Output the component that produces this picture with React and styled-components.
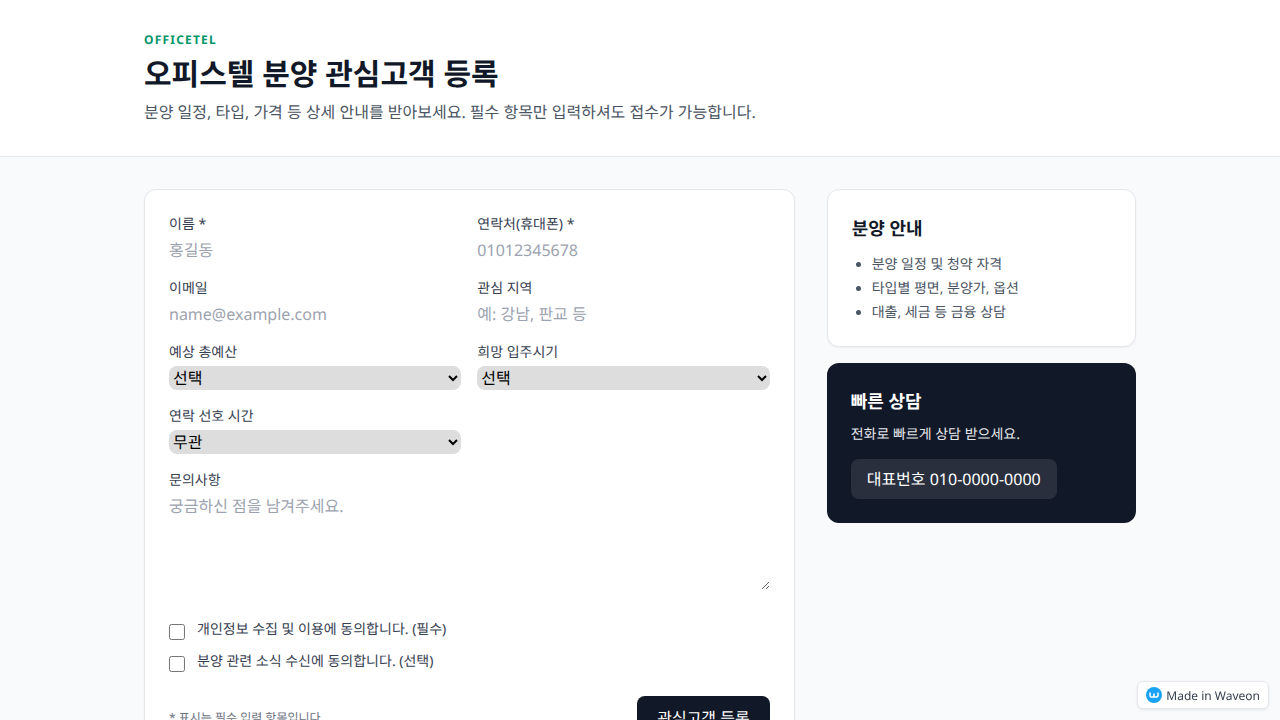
import React from "react";
import styled, { createGlobalStyle } from "styled-components";

const GlobalStyle = createGlobalStyle`
  * {
    box-sizing: border-box;
  }
  body {
    margin: 0;
    background: #f9fafb;
    color: #111827;
    font-family: "Noto Sans", "Noto Sans CJK KR", sans-serif;
    text-rendering: geometricPrecision;
    -webkit-font-smoothing: antialiased;
  }
`;

const Header = styled.header`
  background: #fff;
  border-bottom: 1px solid #e5e7eb;
  padding: 32px 0;
`;

const Container = styled.div`
  width: 992px;
  margin: 0 auto;
`;

const Kicker = styled.p`
  margin: 0;
  color: #059669;
  font-size: 12px;
  line-height: 16px;
  font-weight: 700;
  letter-spacing: 1.2px;
`;

const Title = styled.h1`
  margin: 8px 0 0;
  font-size: 30px;
  line-height: 36px;
  font-weight: 700;
  color: #111827;
`;

const Subtitle = styled.p`
  margin: 8px 0 0;
  font-size: 16px;
  line-height: 24px;
  color: #4b5563;
`;

const Main = styled(Container)`
  display: grid;
  grid-template-columns: minmax(0, 1fr) 309.33px;
  gap: 32px;
  padding: 32px 0;
  align-items: start;
`;

const FormCard = styled.form`
  background: #fff;
  border: 1px solid #e5e7eb;
  border-radius: 12px;
  box-shadow: 0 1px 2px rgba(0, 0, 0, 0.05);
  padding: 24px;
`;

const FieldGrid = styled.div`
  display: grid;
  grid-template-columns: 1fr 1fr;
  gap: 16px;
`;

const Field = styled.label`
  display: flex;
  flex-direction: column;
  gap: 3px;
  grid-column: ${({ $wide }) => ($wide ? "1 / -1" : "auto")};
`;

const LabelText = styled.span`
  font-size: 14px;
  line-height: 21px;
  color: #374151;
`;

const Input = styled.input`
  border: 0;
  outline: 0;
  padding: 0;
  width: 100%;
  height: 24px;
  background: transparent;
  font: inherit;
  font-size: 16px;
  line-height: 24px;
  text-rendering: geometricPrecision;
  &::placeholder {
    color: #9ca3af;
  }
`;

const Select = styled.select`
  border: 0;
  width: 100%;
  height: 24px;
  border-radius: 8px;
  background: #dddddd;
  color: #000;
  font: inherit;
  font-size: 16px;
  text-rendering: geometricPrecision;
`;

const TextareaWrap = styled.div`
  line-height: normal;
`;

const Textarea = styled.textarea`
  border: 0;
  outline: 0;
  padding: 0;
  width: 100%;
  height: 96px;
  background: transparent;
  font: inherit;
  font-size: 16px;
  line-height: 24px;
  text-rendering: geometricPrecision;
  &::placeholder {
    color: #9ca3af;
  }
`;

const Consents = styled.div`
  display: flex;
  flex-direction: column;
  gap: 11px;
  margin-top: 24px;
`;

const Consent = styled.label`
  display: flex;
  align-items: flex-start;
  gap: 12px;
  font-size: 14px;
  line-height: 21px;
  color: #374151;
`;

const Checkbox = styled.input.attrs({ type: "checkbox" })`
  width: 16px;
  height: 16px;
  margin: 5px 0 0;
  flex: none;
`;

const FormFooter = styled.div`
  display: flex;
  align-items: center;
  justify-content: space-between;
  margin-top: 24px;
`;

const Note = styled.p`
  margin: 0;
  font-size: 12px;
  line-height: 16px;
  color: #6b7280;
`;

const SubmitButton = styled.button`
  border: 0;
  border-radius: 8px;
  background: #111827;
  color: #fff;
  font: inherit;
  font-size: 16px;
  line-height: 24px;
  padding: 10px 20px;
  text-rendering: geometricPrecision;
`;

const Sidebar = styled.aside`
  display: flex;
  flex-direction: column;
  gap: 16px;
`;

const InfoCard = styled.section`
  background: #fff;
  border: 1px solid #e5e7eb;
  border-radius: 12px;
  box-shadow: 0 1px 2px rgba(0, 0, 0, 0.05);
  padding: 24px 24px 23px;
`;

const CardTitle = styled.h3`
  margin: 0;
  font-size: 18px;
  line-height: 30px;
  font-weight: 700;
  color: ${({ $light }) => ($light ? "#fff" : "#111827")};
`;

const InfoList = styled.ul`
  margin: 10px 0 0;
  padding: 0 0 0 20px;
  font-size: 14px;
  line-height: 21px;
  color: #4b5563;
`;

const InfoItem = styled.li`
  & + & {
    margin-top: 3px;
  }
`;

const DarkCard = styled.section`
  background: #111827;
  border-radius: 12px;
  padding: 24px;
  color: #fff;
`;

const DarkText = styled.p`
  margin: 7px 0 0;
  font-size: 14px;
  line-height: 21px;
  color: #e5e7eb;
`;

const PhoneButton = styled.a`
  display: block;
  width: fit-content;
  margin-top: 14px;
  padding: 8px 16px;
  border-radius: 8px;
  background: rgba(255, 255, 255, 0.1);
  color: #fff;
  font-size: 16px;
  line-height: 24px;
`;

const Badge = styled.a`
  position: fixed;
  right: 11px;
  bottom: 11px;
  display: flex;
  align-items: center;
  gap: 4px;
  height: 28px;
  padding: 0 8px;
  background: #fff;
  border: 1px solid #e5e7eb;
  border-radius: 6px;
  box-shadow: 0 1px 3px rgba(0, 0, 0, 0.08);
  font-family: "Noto Sans", sans-serif;
  font-size: 12px;
  color: #374151;
`;

const BadgeLogo = () => (
  <svg width="16" height="16" viewBox="0 0 16 16" aria-hidden="true">
    <circle cx="8" cy="8" r="8" fill="#1aa3f5" />
    <path
      d="M4 6v2.4c0 1 .6 1.6 1.5 1.6S8 9.400 8 8.400V7v1.400c0 1 .6 1.600 1.500 1.600S12 9.400 12 8.400V6"
      fill="none"
      stroke="#fff"
      strokeWidth="1.5"
      strokeLinecap="round"
      strokeLinejoin="round"
    />
  </svg>
);

const App = () => {
  return (
    <>
      <GlobalStyle />
      <Header>
        <Container>
          <Kicker>OFFICETEL</Kicker>
          <Title>오피스텔 분양 관심고객 등록</Title>
          <Subtitle>
            분양 일정, 타입, 가격 등 상세 안내를 받아보세요. 필수 항목만 입력하셔도 접수가 가능합니다.
          </Subtitle>
        </Container>
      </Header>
      <Main>
        <FormCard onSubmit={(e) => e.preventDefault()}>
          <FieldGrid>
            <Field>
              <LabelText>이름 *</LabelText>
              <Input placeholder="홍길동" />
            </Field>
            <Field>
              <LabelText>연락처(휴대폰) *</LabelText>
              <Input placeholder="01012345678" />
            </Field>
            <Field>
              <LabelText>이메일</LabelText>
              <Input placeholder="name@example.com" />
            </Field>
            <Field>
              <LabelText>관심 지역</LabelText>
              <Input placeholder="예: 강남, 판교 등" />
            </Field>
            <Field>
              <LabelText>예상 총예산</LabelText>
              <Select>
                <option>선택</option>
              </Select>
            </Field>
            <Field>
              <LabelText>희망 입주시기</LabelText>
              <Select>
                <option>선택</option>
              </Select>
            </Field>
            <Field>
              <LabelText>연락 선호 시간</LabelText>
              <Select>
                <option>무관</option>
              </Select>
            </Field>
            <Field $wide>
              <LabelText>문의사항</LabelText>
              <TextareaWrap>
                <Textarea placeholder="궁금하신 점을 남겨주세요." />
              </TextareaWrap>
            </Field>
          </FieldGrid>
          <Consents>
            <Consent>
              <Checkbox />
              개인정보 수집 및 이용에 동의합니다. (필수)
            </Consent>
            <Consent>
              <Checkbox />
              분양 관련 소식 수신에 동의합니다. (선택)
            </Consent>
          </Consents>
          <FormFooter>
            <Note>* 표시는 필수 입력 항목입니다.</Note>
            <SubmitButton type="submit">관심고객 등록</SubmitButton>
          </FormFooter>
        </FormCard>
        <Sidebar>
          <InfoCard>
            <CardTitle>분양 안내</CardTitle>
            <InfoList>
              <InfoItem>분양 일정 및 청약 자격</InfoItem>
              <InfoItem>타입별 평면, 분양가, 옵션</InfoItem>
              <InfoItem>대출, 세금 등 금융 상담</InfoItem>
            </InfoList>
          </InfoCard>
          <DarkCard>
            <CardTitle $light>빠른 상담</CardTitle>
            <DarkText>전화로 빠르게 상담 받으세요.</DarkText>
            <PhoneButton>대표번호 010-0000-0000</PhoneButton>
          </DarkCard>
        </Sidebar>
      </Main>
      <Badge>
        <BadgeLogo />
        Made in Waveon
      </Badge>
    </>
  );
};

export default App;
